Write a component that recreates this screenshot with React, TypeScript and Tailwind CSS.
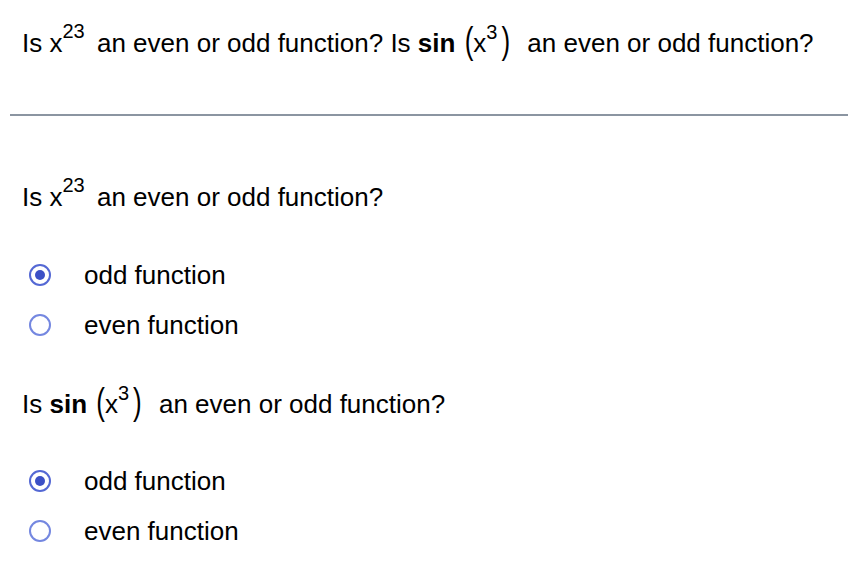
import React from 'react';

function Pow({ base, exp, raise = 'r14' }: { base: string; exp: string; raise?: 'r13' | 'r14' }) {
  return (
    <span className="inline-block">
      {base}
      <span
        className={`relative text-[20px] leading-none ${raise === 'r13' ? '-top-[13px]' : '-top-[14px]'}`}
      >
        {exp}
      </span>
    </span>
  );
}

function Paren({ children, className = '' }: { children: string; className?: string }) {
  return (
    <span className={`relative -top-[3px] inline-block origin-center scale-y-[1.45] ${className}`}>
      {children}
    </span>
  );
}

function SinX3() {
  return (
    <>
      <b className="font-bold">sin</b>{' '}
      <span className="ml-[2px] mr-[10px] inline-block">
        <Paren>(</Paren>
        <Pow base="x" exp="3" raise="r13" />
        <Paren className="ml-[4px]">)</Paren>
      </span>
    </>
  );
}

function Radio({ checked, label }: { checked?: boolean; label: string }) {
  return (
    <div className="flex h-[50px] items-center">
      <span
        className={`ml-[7px] flex h-[22px] w-[22px] items-center justify-center rounded-full border-2 ${
          checked ? 'border-[#5468d4]' : 'border-[#7487e0]'
        }`}
      >
        {checked && <span className="h-[10px] w-[10px] rounded-full bg-[#3c50c6]" />}
      </span>
      <span className="ml-[33px]">{label}</span>
    </div>
  );
}

export default function App() {
  return (
    <div
      className="min-h-[574px] bg-white text-[26px] leading-[30px] text-black"
      style={{ fontFamily: '"Liberation Sans", Arial, sans-serif' }}
    >
      <div className="pl-[22px] pt-[28px] whitespace-nowrap">
        Is <Pow base="x" exp="23" /> <span className="ml-[5px]">an even or odd function? Is </span>
        <SinX3 /> an even or odd function?
      </div>

      <div className="ml-[10px] mt-[56px] h-[2px] bg-[#8b95a1]" />

      <div className="pl-[22px]">
        <div className="mt-[66px] whitespace-nowrap">
          Is <Pow base="x" exp="23" /> <span className="ml-[5px]">an even or odd function?</span>
        </div>
        <div className="mt-[38px]">
          <Radio checked label="odd function" />
          <Radio label="even function" />
        </div>

        <div className="mt-[39px] whitespace-nowrap">
          Is <SinX3 /> an even or odd function?
        </div>
        <div className="mt-[37px]">
          <Radio checked label="odd function" />
          <Radio label="even function" />
        </div>
      </div>
    </div>
  );
}
